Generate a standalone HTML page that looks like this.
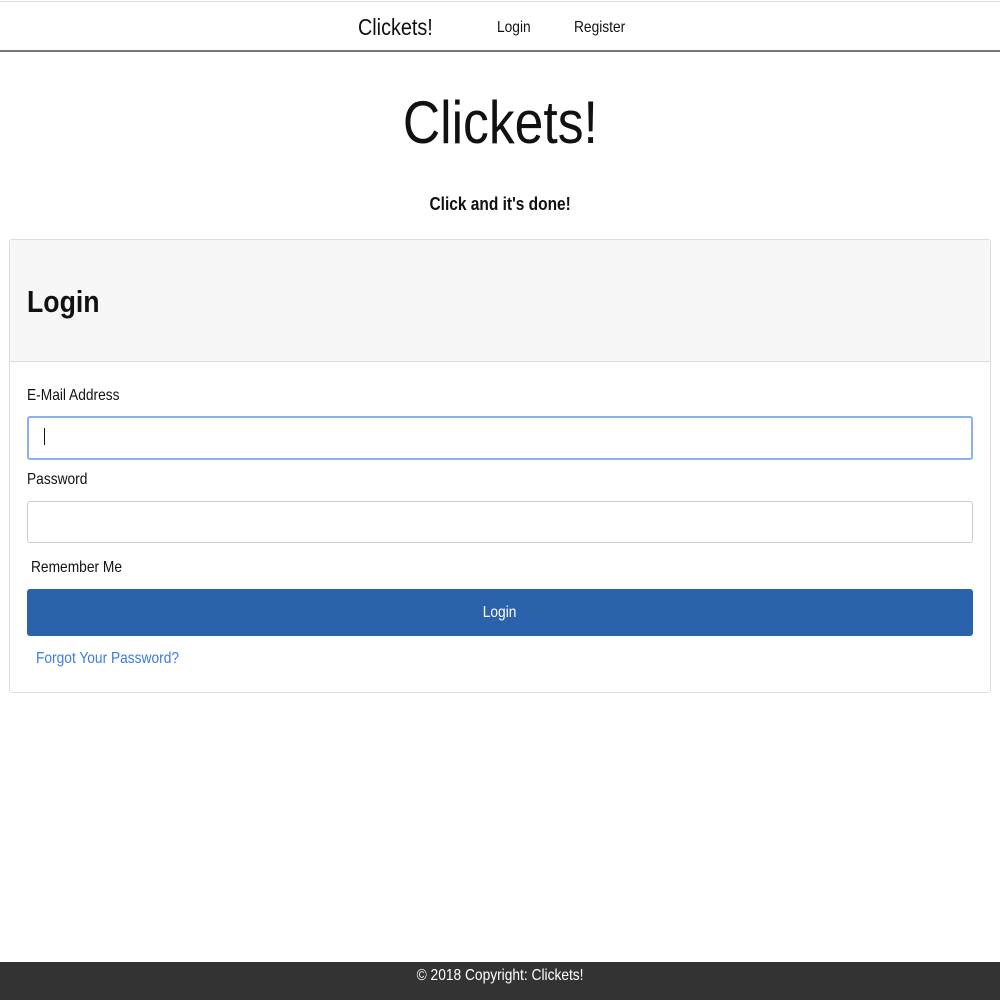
<!DOCTYPE html>
<html><head><style>
body{margin:0;width:1000px;height:1000px;position:relative;background:#fff;font-family:"Liberation Sans",sans-serif;color:#111;overflow:hidden}
.a{position:absolute;white-space:nowrap;line-height:1}
.c{left:0;right:0;text-align:center}
.s{display:inline-block;transform:scaleX(0.86)}
.l{transform-origin:left center}
</style></head><body>
<div style="position:absolute;left:0;top:1px;width:1000px;height:1px;background:#ddd"></div>
<div style="position:absolute;left:0;top:50px;width:1000px;height:2px;background:#777"></div>
<div class="a" style="left:358px;top:16px;font-size:23px"><span class="s l">Clickets!</span></div>
<div class="a" style="left:497px;top:20px;font-size:16px"><span class="s l">Login</span></div>
<div class="a" style="left:574px;top:20px;font-size:16px"><span class="s l">Register</span></div>
<div class="a c" style="top:93px;font-size:60px"><span class="s">Clickets!</span></div>
<div class="a c" style="top:195px;font-size:18px;font-weight:bold"><span class="s">Click and it's done!</span></div>
<div style="position:absolute;left:9px;top:239px;width:980px;height:452px;border:1px solid #ddd;border-radius:3px"></div>
<div style="position:absolute;left:10px;top:240px;width:980px;height:121px;background:#f7f7f7;border-bottom:1px solid #ddd"></div>
<div class="a" style="left:27px;top:286px;font-size:31px;font-weight:bold"><span class="s l">Login</span></div>
<div class="a" style="left:27px;top:388px;font-size:16px"><span class="s l">E-Mail Address</span></div>
<div style="position:absolute;left:27px;top:416px;width:942px;height:40px;border:2px solid #8cb0f0;border-radius:3px"></div>
<div style="position:absolute;left:44px;top:428px;width:1px;height:17px;background:#111"></div>
<div class="a" style="left:27px;top:472px;font-size:16px"><span class="s l">Password</span></div>
<div style="position:absolute;left:27px;top:501px;width:944px;height:40px;border:1px solid #ccc;border-radius:3px"></div>
<div class="a" style="left:31px;top:560px;font-size:16px"><span class="s l">Remember Me</span></div>
<div style="position:absolute;left:27px;top:589px;width:946px;height:47px;background:#2a62ac;border-radius:3px"></div>
<div class="a c" style="top:605px;font-size:16px;color:#fff"><span class="s">Login</span></div>
<div class="a" style="left:36px;top:651px;font-size:16px;color:#3b7ddd"><span class="s l">Forgot Your Password?</span></div>
<div style="position:absolute;left:0;top:962px;width:1000px;height:38px;background:#333"></div>
<div class="a c" style="top:968px;font-size:16px;color:#fff"><span class="s">© 2018 Copyright: Clickets!</span></div>
</body></html>
